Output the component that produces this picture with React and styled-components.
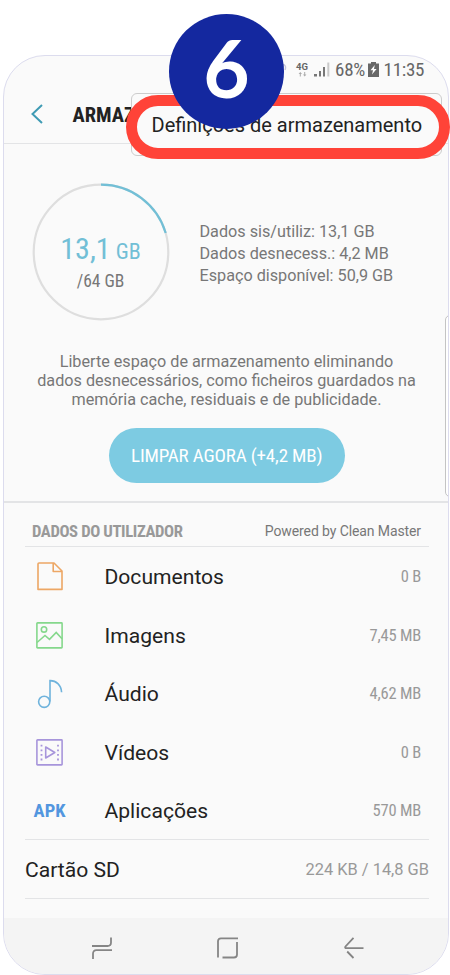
import React from "react";
import styled, { createGlobalStyle } from "styled-components";

const COLOR = {
  screen: "#fafafa",
  frame: "#dcdcee",
  accent: "#7dcbe2",
  text: "#222222",
  muted: "#777777",
  soft: "#999999",
  line: "#e3e4e6",
  badge: "#14289f",
  highlight: "#ff4338",
};

const ICONS = {
  document: (
    <svg width="26" height="29" viewBox="0 0 26 29" fill="none" stroke="#eda765" strokeWidth="1.6">
      <path d="M2 1H17L25 9V27.4H1V2Q1 1 2 1Z M16.2 1V9.5H25" strokeLinejoin="round" />
    </svg>
  ),
  image: (
    <svg width="27" height="27" viewBox="0 0 27 27" fill="none" stroke="#85d88c" strokeWidth="1.6">
      <rect x="0.9" y="0.9" width="25.2" height="25" rx="0.6" />
      <circle cx="8" cy="7.4" r="2.7" />
      <path d="M1 20.5L9 13.5L13.5 17.3L20.2 10.5L26 16.8" />
    </svg>
  ),
  audio: (
    <svg width="26" height="30" viewBox="0 0 26 30" fill="none" stroke="#6fb3dc" strokeWidth="1.6">
      <circle cx="7.2" cy="22.8" r="5.6" />
      <path d="M13 22.5V1.6C19 1.4 24.2 6 24.6 13.2" />
    </svg>
  ),
  video: (
    <svg width="27" height="27" viewBox="0 0 27 27" fill="none" stroke="#a795db" strokeWidth="1.6">
      <rect x="0.9" y="0.9" width="25.2" height="25" rx="0.6" />
      <path d="M9.7 8V19L18.8 13.5Z" strokeLinejoin="round" />
      <path d="M5.5 5.8V22M22 5.8V22" strokeWidth="1.8" strokeDasharray="1.8 2.8" />
    </svg>
  ),
};

const ITEMS = [
  { icon: "document", label: "Documentos", value: "0 B" },
  { icon: "image", label: "Imagens", value: "7,45 MB" },
  { icon: "audio", label: "Áudio", value: "4,62 MB" },
  { icon: "video", label: "Vídeos", value: "0 B" },
  { icon: "apk", label: "Aplicações", value: "570 MB" },
];

const StatusBar = () => (
  <StatusWrapper>
    <Wifi width="6" height="8" viewBox="0 0 6 8">
      <path d="M1 0Q6 1 4 6" fill="none" stroke="#c4c4dc" strokeWidth="1.4" />
    </Wifi>
    <Network>
      <span>4G</span>
      <svg width="9" height="5" viewBox="0 0 9 5" fill="#aaaaaa">
        <path d="M2.3 0L4 2H2.8V4.5H1.8V2H0.6Z M6.7 4.5L8.4 2.5H7.2V0H6.2V2.5H5Z" />
      </svg>
    </Network>
    <Signal width="16" height="15" viewBox="0 0 16 15">
      <path d="M0 12H3V14.5H0Z M5 9H7V14.5H5Z M9 5H11V14.5H9Z" fill="#777777" />
      <path d="M13.3 0.5H15.3V14.5H13.3Z" fill="#c9c9c9" />
    </Signal>
    <StatusText $width={29}>68%</StatusText>
    <Battery width="11" height="15" viewBox="0 0 11 15">
      <path d="M3 0H8V1.5H11V15H0V1.5H3Z" fill="#686868" />
      <path d="M6.8 3L2.5 8.3H5L4 12.5L8.6 7H6Z" fill="#ffffff" />
    </Battery>
    <StatusText $width={41}>11:35</StatusText>
  </StatusWrapper>
);

const StorageSummary = () => (
  <SummaryWrapper>
    <Ring>
      <svg width="138" height="138" viewBox="0 0 138 138" fill="none" strokeWidth="2.2">
        <circle cx="69" cy="69" r="67.3" stroke="#dedede" />
        <path d="M69 1.7A67.3 67.3 0 0 1 133.7 50" stroke="#72bfd6" />
      </svg>
      <RingText>
        <Used>
          13,1<small>GB</small>
        </Used>
        <Total>/64 GB</Total>
      </RingText>
    </Ring>
    <Info>
      <p>Dados sis/utiliz: 13,1 GB</p>
      <p>Dados desnecess.: 4,2 MB</p>
      <p>Espaço disponível: 50,9 GB</p>
    </Info>
  </SummaryWrapper>
);

const NavigationBar = () => (
  <NavWrapper>
    <svg width="20" height="22" viewBox="0 0 20 22">
      <path d="M0 9H15.5Q19 9 19 5.5V0.5M20 13.2H4.5Q1 13.2 1 16.7V22" />
    </svg>
    <svg width="21" height="22" viewBox="0 0 21 22">
      <path d="M21 1.3H4Q1 1.3 1 4.3V20.5M5.5 20.5H17Q20 20.5 20 17.5V5" />
    </svg>
    <svg width="20" height="22" viewBox="0 0 20 22">
      <path d="M9.5 0.8L1.5 9.5Q0.5 11.2 2.5 11.2H19.5M3.2 14.5L9.5 21" />
    </svg>
  </NavWrapper>
);

const App = () => (
  <Page>
    <GlobalStyle />
    <Phone>
      <StatusBar />
      <Header>
        <svg width="12" height="20" viewBox="0 0 12 20" fill="none" stroke="#3f9bb4" strokeWidth="2">
          <path d="M11 1L1.5 10L11 19" />
        </svg>
        <h1>ARMAZ</h1>
      </Header>
      <StorageSummary />
      <Description>
        Liberte espaço de armazenamento eliminando
        <br />
        dados desnecessários, como ficheiros guardados na
        <br />
        memória cache, residuais e de publicidade.
      </Description>
      <CleanButton>LIMPAR AGORA (+4,2 MB)</CleanButton>
      <UserData>
        <SectionHeader>
          <h2>DADOS DO UTILIZADOR</h2>
          <span>Powered by Clean Master</span>
        </SectionHeader>
        {ITEMS.map(({ icon, label, value }) => (
          <Item key={label}>
            <IconBox>{ICONS[icon] || <Apk>APK</Apk>}</IconBox>
            <Label>{label}</Label>
            <Value>{value}</Value>
          </Item>
        ))}
        <CardRow>
          <Label>Cartão SD</Label>
          <CardValue>224 KB / 14,8 GB</CardValue>
        </CardRow>
      </UserData>
      <NavigationBar />
      <EdgeHandle />
    </Phone>
    <Menu>Definições de armazenamento</Menu>
    <Highlight />
    <StepBadge>6</StepBadge>
  </Page>
);

const GlobalStyle = createGlobalStyle`
  * {
    box-sizing: border-box;
  }
  body {
    margin: 0;
    background: white;
    font-family: Roboto, "Liberation Sans", sans-serif;
    color: ${COLOR.text};
  }
  h1, h2, p {
    margin: 0;
  }
`;

const Page = styled.div`
  position: relative;
  width: 450px;
  height: 975px;
  padding: 55px 1px 0 3px;
  overflow: hidden;
`;

const Phone = styled.main`
  position: relative;
  display: flex;
  flex-direction: column;
  height: 919.5px;
  overflow: hidden;
  background: ${COLOR.screen};
  border: 1px solid ${COLOR.frame};
  border-radius: 42px;
`;

const StatusWrapper = styled.div`
  display: flex;
  align-items: center;
  height: 27px;
  padding-left: 277px;
  color: #666666;
`;

const Wifi = styled.svg`
  margin: 0 9px 4px 0;
`;

const Network = styled.div`
  display: flex;
  flex-direction: column;
  align-items: center;
  width: 12px;
  font-size: 9.5px;
  font-weight: bold;
  line-height: 10px;
`;

const Signal = styled.svg`
  margin-left: 6px;
`;

const StatusText = styled.span`
  width: ${({ $width }) => $width}px;
  margin-left: 5px;
  font-size: 19px;
  font-stretch: 75%;
  letter-spacing: -0.25px;
  white-space: nowrap;
`;

const Battery = styled.svg`
  margin-left: 3.5px;
`;

const Header = styled.header`
  display: flex;
  align-items: center;
  gap: 30px;
  height: 61px;
  padding: 2px 0 0 26.5px;
  border-bottom: 1px solid ${COLOR.line};

  h1 {
    padding-top: 1px;
    font-size: 20.5px;
    font-stretch: 75%;
    font-weight: bold;
  }
`;

const SummaryWrapper = styled.section`
  display: flex;
  align-items: center;
  gap: 30px;
  height: 138px;
  margin-top: 39px;
  padding-left: 27.5px;
`;

const Ring = styled.div`
  display: grid;
  width: 138px;
  height: 138px;

  > * {
    grid-area: 1 / 1;
  }
`;

const RingText = styled.div`
  display: flex;
  flex-direction: column;
  align-items: center;
  padding-top: 47px;
`;

const Used = styled.div`
  font-size: 30px;
  font-stretch: 75%;
  line-height: 37px;
  color: #72bfd6;

  small {
    margin-left: 5px;
    font-size: 22px;
  }
`;

const Total = styled.div`
  font-size: 17.5px;
  font-stretch: 75%;
  line-height: 22px;
  color: ${COLOR.muted};
`;

const Info = styled.div`
  padding-top: 3px;
  font-size: 16.2px;
  line-height: 22px;
  color: ${COLOR.muted};
  white-space: nowrap;
`;

const Description = styled.p`
  margin-top: 31px;
  padding-left: 1px;
  font-size: 16.2px;
  line-height: 19px;
  color: ${COLOR.muted};
  text-align: center;
  white-space: nowrap;
`;

const CleanButton = styled.button`
  width: 235.5px;
  height: 55px;
  margin: 19px 0 0 105px;
  padding: 0;
  font-family: inherit;
  font-size: 19px;
  font-stretch: 75%;
  letter-spacing: -0.15px;
  color: white;
  background: ${COLOR.accent};
  border: none;
  border-radius: 28px;
  flex-shrink: 0;
`;

const UserData = styled.section`
  margin-top: 18px;
  padding: 0 19px 0 21px;
  border-top: 2px solid ${COLOR.line};
`;

const SectionHeader = styled.div`
  display: flex;
  align-items: center;
  justify-content: space-between;
  height: 44px;
  padding: 13px 8px 0 7px;
  border-bottom: 1px solid ${COLOR.line};

  h2 {
    font-size: 16.7px;
    font-stretch: 75%;
    font-weight: bold;
    letter-spacing: -0.4px;
    color: ${COLOR.soft};
  }
  span {
    font-size: 14px;
    letter-spacing: -0.1px;
    color: ${COLOR.muted};
  }
`;

const Item = styled.div`
  display: flex;
  align-items: center;
  height: 58.4px;
  padding: 1.6px 8px 0 7px;
`;

const IconBox = styled.div`
  display: flex;
  justify-content: center;
  width: 35px;
  margin-right: 37.5px;
`;

const Apk = styled.span`
  font-size: 18.5px;
  font-stretch: 75%;
  font-weight: bold;
  color: #5296df;
`;

const Label = styled.span`
  flex: 1;
  font-size: 21.1px;
`;

const Value = styled.span`
  font-size: 16.5px;
  font-stretch: 75%;
  letter-spacing: -0.2px;
  color: ${COLOR.soft};
`;

const CardRow = styled.div`
  display: flex;
  align-items: center;
  height: 60px;
  padding-top: 1px;
  border: solid ${COLOR.line};
  border-width: 1px 0;
`;

const CardValue = styled.span`
  font-size: 16.4px;
  color: ${COLOR.soft};
`;

const NavWrapper = styled.nav`
  display: flex;
  align-items: center;
  justify-content: center;
  gap: 105.5px;
  height: 56px;
  margin-top: auto;
  padding: 5px 0 0 3px;
  background: #f4f4f4;

  svg {
    fill: none;
    stroke: #858585;
    stroke-width: 1.8;
  }
`;

const EdgeHandle = styled.div`
  position: absolute;
  top: 259px;
  right: -7px;
  width: 10px;
  height: 182px;
  background: white;
  border: 1px solid #c4c4c4;
  border-radius: 6px;
`;

const Menu = styled.div`
  position: absolute;
  top: 93px;
  left: 131px;
  width: 311px;
  height: 63px;
  padding-left: 19.5px;
  font-size: 20px;
  line-height: 63px;
  white-space: nowrap;
  background: ${COLOR.screen};
  border: 1px solid #cccccc;
  border-radius: 6px;
`;

const Highlight = styled.div`
  position: absolute;
  top: 95px;
  left: 125.5px;
  width: 324px;
  height: 64px;
  border: 11px solid ${COLOR.highlight};
  border-radius: 32px;
`;

const StepBadge = styled.div`
  position: absolute;
  top: 13.5px;
  left: 169px;
  width: 115px;
  height: 115px;
  font-family: Lato, sans-serif;
  font-size: 80px;
  font-weight: bold;
  line-height: 107px;
  text-align: center;
  color: white;
  background: ${COLOR.badge};
  border-radius: 50%;
`;

export default App;
